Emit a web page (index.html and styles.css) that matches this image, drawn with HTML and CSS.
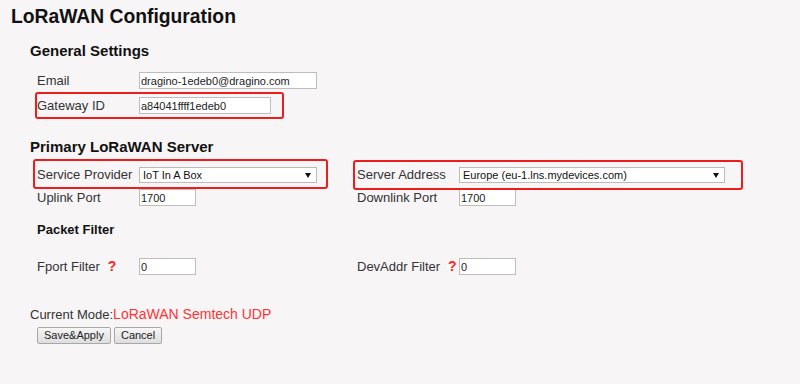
FILE: index.html
```html
<!DOCTYPE html>
<html lang="en">
<head>
    <meta charset="UTF-8">
    <meta name="viewport" content="width=device-width, initial-scale=1.0">
    <title>LoRaWAN Configuration</title>
    <link rel="stylesheet" href="styles.css">
</head>
<body>
    <h1 class="title">LoRaWAN Configuration</h1>
    <div class="panel">
        <h2 class="section-title">General Settings</h2>
        <div class="fields fields-general">
            <div class="row">
                <div class="field">
                    <label for="email">Email</label>
                    <input id="email" class="input-long" type="text" value="dragino-1edeb0@dragino.com">
                </div>
            </div>
            <div class="row row-next">
                <div class="field mark mark-gateway">
                    <label for="gwid">Gateway ID</label>
                    <input id="gwid" class="input-mid" type="text" value="a84041ffff1edeb0">
                </div>
            </div>
        </div>

        <h2 class="section-title section-server">Primary LoRaWAN Server</h2>
        <div class="fields fields-server">
            <div class="row">
                <div class="field mark mark-provider">
                    <label for="provider">Service Provider</label>
                    <span class="select select-long">
                        <select id="provider">
                            <option>IoT In A Box</option>
                        </select>
                    </span>
                </div>
                <div class="field mark mark-address">
                    <label for="address">Server Address</label>
                    <span class="select select-wide">
                        <select id="address">
                            <option>Europe (eu-1.lns.mydevices.com)</option>
                        </select>
                    </span>
                </div>
            </div>
            <div class="row row-port">
                <div class="field">
                    <label for="up">Uplink Port</label>
                    <input id="up" class="input-short" type="text" value="1700">
                </div>
                <div class="field">
                    <label for="down">Downlink Port</label>
                    <input id="down" class="input-short" type="text" value="1700">
                </div>
            </div>
        </div>

        <h3 class="sub-title">Packet Filter</h3>
        <div class="fields fields-filter">
            <div class="row">
                <div class="field">
                    <label for="fport">Fport Filter<span class="help">?</span></label>
                    <input id="fport" class="input-short" type="text" value="0">
                </div>
                <div class="field">
                    <label for="devaddr">DevAddr Filter<span class="help">?</span></label>
                    <input id="devaddr" class="input-short" type="text" value="0">
                </div>
            </div>
        </div>

        <p class="mode">Current Mode:<span class="mode-value">LoRaWAN Semtech UDP</span></p>
        <div class="actions">
            <button type="button">Save&amp;Apply</button>
            <button type="button">Cancel</button>
        </div>
    </div>
</body>
</html>
```

FILE: styles.css
```css
body {
    font-family: "Liberation Sans", Arial, sans-serif;
    margin: 0;
    padding: 0;
    background: #f8f5f7;
    color: #333;
}

.title {
    font-size: 19.3px;
    line-height: 22px;
    margin: 6px 0 0 11px;
    color: #111;
}

.panel {
    margin-left: 30px;
}

.section-title {
    font-size: 15px;
    line-height: 18px;
    margin: 14px 0 0;
    color: #111;
}

.section-server {
    margin-top: 24px;
}

.sub-title {
    font-size: 13px;
    line-height: 16px;
    margin: 16px 0 0 7px;
    color: #111;
}

.fields {
    margin-left: 7px;
}

.fields-general {
    margin-top: 12px;
}

.fields-server {
    margin-top: 11px;
}

.fields-filter {
    margin-top: 20px;
}

.row {
    display: grid;
    grid-template-columns: 320px auto;
    align-items: center;
}

.row-next {
    margin-top: 8px;
}

.row-port {
    margin-top: 6px;
}

.field {
    display: flex;
    align-items: center;
    justify-self: start;
}

.field label {
    flex: none;
    width: 102px;
    font-size: 13px;
    line-height: 16px;
}

.help {
    color: #f22;
    font-weight: bold;
    font-size: 14px;
    margin-left: 8px;
}

input {
    box-sizing: border-box;
    height: 17px;
    margin: 0;
    padding: 0 2px 0 1px;
    border: 1px solid #bdbdbd;
    background: #fff;
    font-family: "Liberation Sans", Arial, sans-serif;
    font-size: 11px;
    color: #222;
}

.input-long {
    width: 178px;
}

.input-mid {
    width: 132px;
}

.input-short {
    width: 57px;
}

.select {
    position: relative;
    display: block;
}

.select select {
    appearance: none;
    -webkit-appearance: none;
    box-sizing: border-box;
    display: block;
    width: 100%;
    height: 16px;
    margin: 0;
    padding: 0 14px 0 3px;
    border: 1px solid #bbb;
    border-radius: 0;
    background: #fff;
    font-family: "Liberation Sans", Arial, sans-serif;
    font-size: 11px;
    line-height: 14px;
    color: #111;
}

.select::after {
    content: "";
    position: absolute;
    right: 6px;
    top: 6px;
    border-left: 3px solid transparent;
    border-right: 3px solid transparent;
    border-top: 5px solid #111;
    pointer-events: none;
}

.select-long {
    width: 178px;
}

.select-wide {
    width: 266px;
}

/* red highlight frames */
.mark {
    position: relative;
}

.mark::after {
    content: "";
    position: absolute;
    border: 2px solid #ee1d1d;
    border-radius: 3px;
    pointer-events: none;
}

.mark-gateway::after {
    inset: -5px -13px -5px -2px;
}

.mark-provider::after {
    inset: -8px -11px -6px -4px;
}

.mark-address::after {
    inset: -7px -18px -7px -4px;
}

.mode {
    margin: 31px 0 0;
    font-size: 13px;
    line-height: 16px;
}

.mode-value {
    color: #f33;
    font-size: 14px;
}

.actions {
    display: flex;
    gap: 3px;
    margin: 4px 0 0 7px;
}

.actions button {
    height: 17px;
    padding: 0 6px;
    border: 1px solid #a8a8a8;
    border-radius: 2px;
    background: linear-gradient(#f6f6f6, #dedede);
    font-family: "Liberation Sans", Arial, sans-serif;
    font-size: 11px;
    line-height: 13px;
    color: #222;
}
```
